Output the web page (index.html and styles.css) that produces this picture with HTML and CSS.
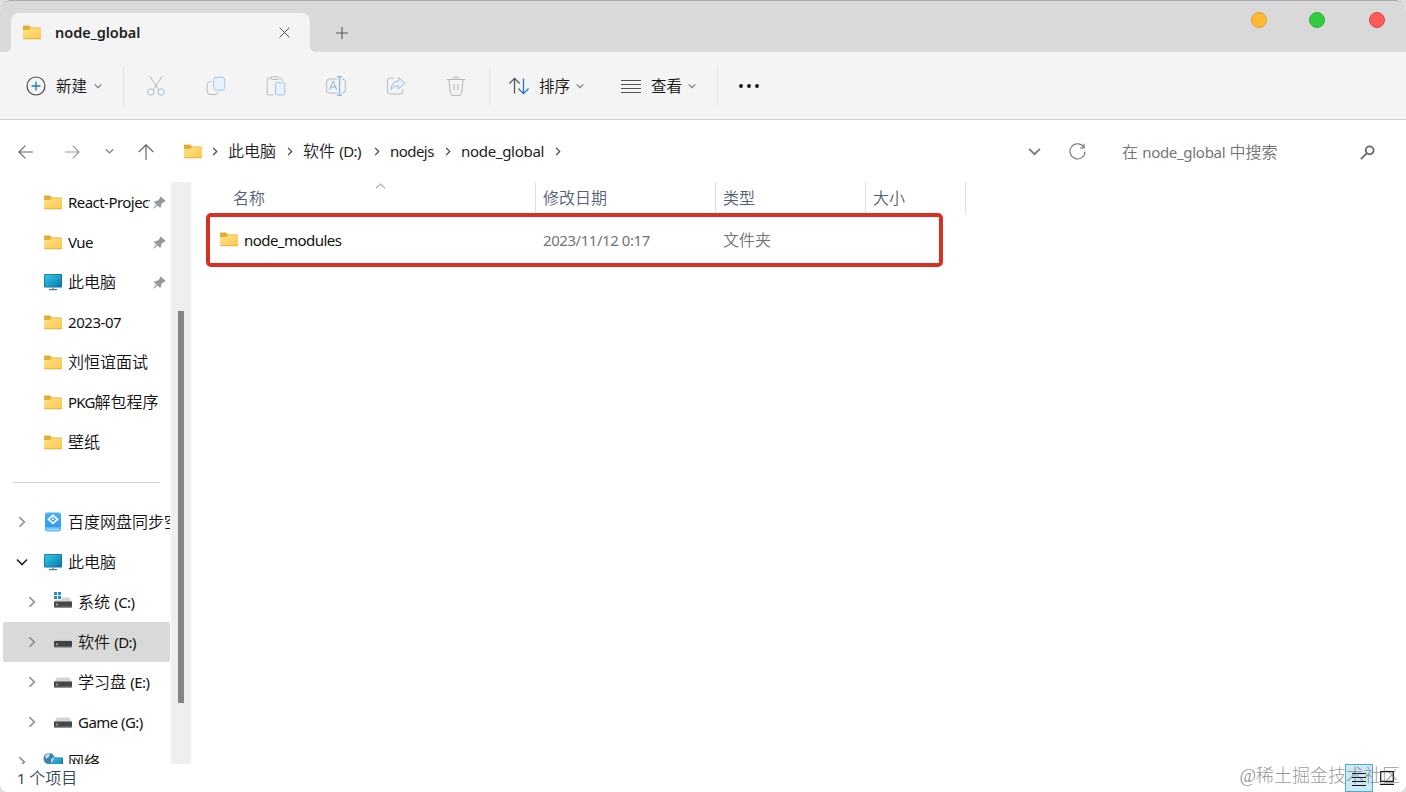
FILE: index.html
```html
<!DOCTYPE html>
<html lang="zh-CN">
<head>
<meta charset="utf-8">
<title>node_global</title>
<link rel="stylesheet" href="styles.css">
</head>
<body>
<svg class="defs" width="0" height="0">
  <defs>
    <linearGradient id="gold" x1="0" y1="0" x2="1" y2="1"><stop offset="0" stop-color="#ffe28c"/><stop offset="1" stop-color="#fbc84b"/></linearGradient>
    <linearGradient id="screen" x1="0" y1="0" x2="1" y2="1"><stop offset="0" stop-color="#32cfe0"/><stop offset="1" stop-color="#0b72b5"/></linearGradient>
    <linearGradient id="sync" x1="0" y1="0" x2="0" y2="1"><stop offset="0" stop-color="#45b2f5"/><stop offset="1" stop-color="#2d94f0"/></linearGradient>
    <symbol id="folder" viewBox="0 0 18 15"><path d="M0 1.2Q0 .5.8.5H6l2 2h9.2q.8 0 .8.8V13H0Z" fill="#e3af32"/><path d="M0 5h5.8L8 3.2h10V13.3q0 .7-.8.7H.8Q0 14 0 13.3Z" fill="url(#gold)"/><path d="M.3 13.8h17.4" stroke="#dba83c" stroke-width=".8"/></symbol>
    <symbol id="pc" viewBox="0 0 18 17"><rect width="18" height="13.6" rx=".8" fill="#14699b"/><rect x=".7" y=".7" width="16.6" height="12.2" fill="url(#screen)"/><path d="M8 13.6h2v2H8z" fill="#8ba0ad"/><path d="M5 15.6h8" stroke="#637783" stroke-width="1.2"/></symbol>
    <symbol id="drive" viewBox="0 0 18 11"><path d="M3 .5h12l3 4.5H0Z" fill="#d3d3d3"/><rect y="4.5" width="18" height="6" rx=".7" fill="#454746"/><path d="M0 9.9h18" stroke="#777" /><rect x="2.2" y="6.7" width="1.5" height="1.5" fill="#a0e5cc"/></symbol>
    <symbol id="drive-flat" viewBox="0 0 18 11"><path d="M2 2.7h14l2 1.8H0Z" fill="#c2c2c2"/><rect y="4" width="18" height="6.3" rx=".7" fill="#414342"/><path d="M0 9.8h18" stroke="#777"/><rect x="2.2" y="6.5" width="1.5" height="1.5" fill="#a0e5cc"/></symbol>
    <symbol id="pin" viewBox="0 0 14 14"><path d="M8.3.5 13.5 5.2 12.3 6.6 11.2 6.4 8.8 9.2 8.6 12 7.4 12.6 4.6 10 1.4 13.4.5 13.5.7 12.5 3.6 9 1.2 6.7 1.8 5.6 4.7 5.2 7.4 2.8 7.2 1.6Z" fill="#949a9f"/></symbol>
    <symbol id="right" viewBox="0 0 8 12"><path d="m1.5 1.2 4.8 4.8-4.8 4.8" fill="none" stroke="currentColor" stroke-width="1.6"/></symbol>
    <symbol id="down" viewBox="0 0 12 8"><path d="m1 1.5 5 5 5-5" fill="none" stroke="currentColor" stroke-width="1.6"/></symbol>
  </defs>
</svg>
<div class="window">
  <header class="titlebar">
    <div class="tab">
      <svg class="folder"><use href="#folder"/></svg>
      <span class="tab-title">node_global</span>
      <svg class="close" viewBox="0 0 12 12"><path d="m.7.7 10.6 10.6M11.3.7.7 11.3"/></svg>
    </div>
    <svg class="add" viewBox="0 0 12 12"><path d="M6 0v12M0 6h12"/></svg>
    <div class="lights"><i class="light amber"></i><i class="light green"></i><i class="light red"></i></div>
  </header>

  <div class="toolbar">
    <div class="tool new">
      <svg class="ic20" viewBox="0 0 20 20"><circle cx="10" cy="10" r="9" stroke="#4c4c4c" stroke-width="1.2"/><path d="M10 5.6v8.8M5.6 10h8.8" stroke="#1d78bb" stroke-width="1.3"/></svg>
      <span>新建</span><svg class="chev"><use href="#down"/></svg>
    </div>
    <i class="sep"></i>
    <div class="actions">
      <svg class="ic20" viewBox="0 0 20 20"><path d="m4 .5 8.7 13.2M16 .5 7.3 13.7" stroke="#b5b8bb"/><circle cx="4.8" cy="16" r="3.2" stroke="#9fc0dc"/><circle cx="15.2" cy="16" r="3.2" stroke="#9fc0dc"/></svg>
      <svg class="ic20" viewBox="0 0 20 20"><path d="M6 5.7H4.3Q1.2 5.7 1.2 8.5v7q0 3 3 3H9q2.4 0 2.7-2.2" stroke="#b5b8bb"/><rect x="7.7" y="1.2" width="11" height="13" rx="2.7" fill="#e7f2fc" stroke="#a5c5df"/></svg>
      <svg class="ic20" viewBox="0 0 20 20"><path d="M7.5 19H3.2Q1.2 19 1.2 17V3.5Q1.2 2 3.2 2H5m9 0h.3Q16.3 2 16.3 4v1" stroke="#b5b8bb"/><rect x="5" y=".8" width="8" height="2.7" rx="1.3" stroke="#b5b8bb"/><rect x="9.5" y="6.7" width="9.3" height="12.3" rx="1.5" fill="#e7f2fc" stroke="#a5c5df"/></svg>
      <svg class="ic20" viewBox="0 0 20 20"><path d="M11 17H3.5Q.6 17 .6 14V6Q.6 3 3.5 3H11m5 0q3.4 0 3.4 3v8q0 3-3.4 3" stroke="#b5b8bb"/><path d="M13.5.7v18.6M11 .7h5M11 19.3h5" stroke="#91b9dd" stroke-width="1.4"/><path d="m3.5 14 3.7-9 3.6 9M4.7 11h4.9" stroke="#8bb8df"/></svg>
      <svg class="ic20" viewBox="0 0 20 20"><path d="M8 2H4.2Q1.3 2 1.3 5v10q0 3 3 3H14q3 0 3-3v-1.5" stroke="#b5b8bb"/><path d="M12.5 1.5 19 7.3l-6.500 5.600V9.700Q8 9.400 4.800 13.700 5.800 5.500 12.500 5Z" fill="#e7f2fc" stroke="#9bbfdd"/></svg>
      <svg class="ic20" viewBox="0 0 20 20"><path d="M1 3.5h18M7.3 3.5Q7.3.8 10 .8t2.7 2.7M3 3.5l1.5 14Q4.7 19.3 6.2 19.3h7.6q1.5 0 1.7-1.8L17 3.5M8.2 8v6.2m3.6-6.2v6.2" stroke="#b2b4b6"/></svg>
    </div>
    <i class="sep"></i>
    <div class="tool sort">
      <svg class="ic20" viewBox="0 0 20 20"><path d="M5.5 17.5V2.5M.4 7.5l5.1-5.1 5.1 5.1" stroke="#555" stroke-width="1.3"/><path d="M14.5 2.5v15M9.4 12.5l5.1 5.1 5.1-5.1" stroke="#2179c4" stroke-width="1.3"/></svg>
      <span>排序</span><svg class="chev"><use href="#down"/></svg>
    </div>
    <div class="tool view">
      <svg class="ic20" viewBox="0 0 20 20"><path d="M0 4.5h20M0 8.5h20M0 12.5h20M0 16.5h20" stroke="#555" stroke-width="1"/></svg>
      <span>查看</span><svg class="chev"><use href="#down"/></svg>
    </div>
    <i class="sep"></i>
    <svg class="dots" viewBox="0 0 20 4"><circle cx="2" cy="2" r="1.9"/><circle cx="10" cy="2" r="1.9"/><circle cx="18" cy="2" r="1.9"/></svg>
  </div>

  <nav class="address">
    <div class="history">
      <svg class="nav-arrow" viewBox="0 0 16 16"><path d="M1 8h14M7.3 1.7 1 8l6.3 6.3"/></svg>
      <svg class="nav-arrow faded" viewBox="0 0 16 16"><path d="M1 8h14M8.7 1.7 15 8l-6.3 6.3"/></svg>
      <svg class="recent"><use href="#down"/></svg>
      <svg class="nav-arrow up" viewBox="0 0 16 16"><path d="M8 16V.9M.7 8 8 .8 15.3 8"/></svg>
    </div>
    <div class="crumbs">
      <svg class="folder"><use href="#folder"/></svg>
      <svg class="crumb-arrow"><use href="#right"/></svg>
      <span class="crumb pc">此电脑</span>
      <svg class="crumb-arrow"><use href="#right"/></svg>
      <span class="crumb disk">软件 <b>(D:)</b></span>
      <svg class="crumb-arrow"><use href="#right"/></svg>
      <span class="crumb js"><b>nodejs</b></span>
      <svg class="crumb-arrow"><use href="#right"/></svg>
      <span class="crumb global"><b>node_global</b></span>
      <svg class="crumb-arrow"><use href="#right"/></svg>
    </div>
    <svg class="history-down"><use href="#down"/></svg>
    <svg class="refresh" viewBox="0 0 18 18"><path d="M15.7 4.5A8 8 0 1 0 17 9M16 .8v4.4h-4.4"/></svg>
    <span class="search">在 <b>node_global</b> 中搜索</span>
    <svg class="magnifier" viewBox="0 0 14 14"><circle cx="9" cy="5" r="3.7"/><path d="M6.2 7.8.8 13.2"/></svg>
  </nav>

  <div class="main">
    <aside class="sidebar">
      <div class="tree">
        <div class="item"><svg class="folder"><use href="#folder"/></svg><span class="short"><b>React-Project</b></span><svg class="pin"><use href="#pin"/></svg></div>
        <div class="item"><svg class="folder"><use href="#folder"/></svg><span class="short"><b>Vue</b></span><svg class="pin"><use href="#pin"/></svg></div>
        <div class="item"><svg class="pc-icon"><use href="#pc"/></svg><span class="short">此电脑</span><svg class="pin"><use href="#pin"/></svg></div>
        <div class="item"><svg class="folder"><use href="#folder"/></svg><span><b class="number">2023-07</b></span></div>
        <div class="item"><svg class="folder"><use href="#folder"/></svg><span>刘恒谊面试</span></div>
        <div class="item"><svg class="folder"><use href="#folder"/></svg><span><b class="caps">PKG</b>解包程序</span></div>
        <div class="item"><svg class="folder"><use href="#folder"/></svg><span>壁纸</span></div>
        <div class="rule"></div>
        <div class="item node"><svg class="arrow"><use href="#right"/></svg><svg class="sync" viewBox="0 0 18 20"><rect x="1" y=".5" width="16" height="18.5" rx="2.5" fill="url(#sync)"/><path d="M1 15h16v2q0 2.5-2.5 2.5h-11Q1 19.5 1 17Z" fill="#62baff"/><path d="M3 17.3h12" stroke="#c5e5ff"/><path d="m9 3.3 4.5 4L9 11.3l-4.5-4Z" fill="none" stroke="#fff" stroke-width="1.7"/><circle cx="9" cy="7.3" r="1" fill="#fff"/></svg><span>百度网盘同步空间</span></div>
        <div class="item node open"><svg class="arrow"><use href="#down"/></svg><svg class="pc-icon"><use href="#pc"/></svg><span>此电脑</span></div>
        <div class="item node child"><svg class="arrow"><use href="#right"/></svg><svg class="system" viewBox="0 0 18 17"><path d="M0 0h3v3H0zM4 0h3v3H4zM0 4h3v3H0zM4 4h3v3H4z" fill="#238fc8"/><path d="M8 5.5h7l3 4.5H0l1.5-2H7Z" fill="#d3d3d3"/><rect y="9.5" width="18" height="6" rx=".7" fill="#454746"/><path d="M0 15h18" stroke="#777"/><rect x="2.2" y="11.7" width="1.5" height="1.5" fill="#a0e5cc"/></svg><span>系统 <b>(C:)</b></span></div>
        <div class="item node child selected"><svg class="arrow"><use href="#right"/></svg><svg class="drive"><use href="#drive-flat"/></svg><span>软件 <b>(D:)</b></span></div>
        <div class="item node child"><svg class="arrow"><use href="#right"/></svg><svg class="drive"><use href="#drive"/></svg><span>学习盘 <b>(E:)</b></span></div>
        <div class="item node child"><svg class="arrow"><use href="#right"/></svg><svg class="drive"><use href="#drive"/></svg><span><b>Game (G:)</b></span></div>
        <div class="item node"><svg class="arrow"><use href="#right"/></svg><svg class="network" viewBox="0 0 20 18"><rect x="5" y="4.5" width="15" height="11" fill="#14699b"/><rect x="5.7" y="5.2" width="13.6" height="9.6" fill="url(#screen)"/><circle cx="6" cy="5.5" r="5.5" fill="#3d7fae"/><path d="M2 3q3-4 5-2L6 4 3 6ZM8 6l3-2q0 4-3 6Z" fill="#b8dceb"/></svg><span>网络</span></div>
      </div>
      <div class="scrollbar"><div class="thumb"></div></div>
    </aside>
    <section class="files">
      <div class="columns">
        <div class="col name">名称<svg class="ascending" viewBox="0 0 12 6"><path d="M1 5.5 6 .8l5 4.7"/></svg></div>
        <div class="col date">修改日期</div><div class="col type">类型</div><div class="col size">大小</div>
      </div>
      <div class="file-row">
        <svg class="folder"><use href="#folder"/></svg>
        <span class="filename"><b>node_modules</b></span><span class="filedate"><b class="number">2023/11/12 0:17</b></span><span class="filetype">文件夹</span>
      </div>
    </section>
  </div>
  <footer class="status">
    <span><b>1</b> 个项目</span>
    <div class="views">
      <i class="details"><svg viewBox="0 0 14 14"><path d="M0 1.5h14M0 5.5h14M0 9.5h14M0 13.5h14"/></svg></i>
      <svg class="thumbs" viewBox="0 0 14 14"><path d="M.7.7h12.6v9.6H.7ZM0 13.3h14"/></svg>
    </div>
    <div class="watermark">@稀土掘金技术社区</div>
  </footer>
</div>
</body>
</html>
```
FILE: styles.css
```css
* { box-sizing: border-box; }
body { margin: 0; background: #dedede; font: 350 16px/24px "Noto Sans", "Noto Sans CJK SC", sans-serif; color: #111; }
svg { display: block; flex: none; fill: none; }
span { white-space: nowrap; }
b { font-weight: 400; font-size: 15px; letter-spacing: -.54px; }
b.number { letter-spacing: -.44px; }
b.caps { letter-spacing: -.8px; }
.defs { position: absolute; }
.window { position: relative; width: 1406px; height: 792px; display: flex; flex-direction: column; overflow: hidden; background: #fff; border-radius: 10px 10px 8px 8px; }
.folder { width: 18px; height: 15px; }

.titlebar { height: 52px; flex: none; display: flex; align-items: flex-start; background: #d9d9d9; border-radius: 10px 10px 0 0; box-shadow: inset 0 2px 0 -1px #aaa; padding: 13px 21px 0 11px; }
.tab { position: relative; width: 299px; height: 39px; display: flex; align-items: center; padding: 0 20px 0 12px; background: #f4f4f4; border-radius: 8px 8px 0 0; }
.tab::before, .tab::after { content: ""; position: absolute; bottom: 0; width: 5px; height: 5px; }
.tab::before { left: -5px; background: radial-gradient(circle at 0 0, transparent 4.5px, #f4f4f4 5px); }
.tab::after { right: -5px; background: radial-gradient(circle at 100% 0, transparent 4.5px, #f4f4f4 5px); }
.tab-title { margin: 0 0 2px 14px; font-size: 14.5px; font-weight: 600; letter-spacing: -.03px; color: #222; }
.close { width: 11px; height: 11px; margin-left: auto; stroke: #444; }
.add { width: 12px; height: 12px; margin: 14px 0 0 26px; stroke: #555; stroke-width: 1.1; }
.lights { display: flex; margin-left: auto; margin-top: -1px; }
.light { width: 16px; height: 16px; border-radius: 50%; }
.amber { background: #ffb932; border: 1px solid #e0a02b; }
.green { margin-left: 42px; background: #33c941; border: 1px solid #2bb237; }
.red { margin-left: 44px; background: #ff5b59; border: 1px solid #d94847; }

.toolbar { height: 68px; flex: none; display: flex; align-items: center; padding: 1px 0 0 26px; background: #f4f4f4; border-bottom: 1px solid #ccc; font-size: 15.5px; }
.tool { display: flex; align-items: center; }
.tool span { margin-left: 10px; width: 32px; }
.new { width: 97px; }
.ic20 { width: 20px; height: 20px; }
.chev { width: 8px; height: 6px; margin-left: 5px; color: #777; }
.new .chev { margin-left: 6px; }
.sep { width: 1px; height: 38px; background: #e1e1e1; }
.actions { display: flex; width: 365px; gap: 40px; padding-left: 22px; }
.sort { width: 112px; margin-left: 19px; }
.view { width: 96px; }
.dots { width: 20px; height: 4px; margin-left: 21px; fill: #111; }

.address { height: 62px; flex: none; display: flex; align-items: center; padding: 0 31px 0 18px; color: #222; }
.history { width: 166px; display: flex; align-items: center; color: #555; }
.nav-arrow { width: 16px; height: 16px; stroke: #666; stroke-width: 1.2; margin-top: 2px; }
.faded { margin-left: 30px; stroke: #999; }
.recent { width: 9px; height: 6px; margin-left: 25px; color: #777; }
.up { margin-left: 24px; width: 16px; }
.crumbs { display: flex; align-items: center; }
.crumb-arrow { width: 6px; height: 9px; color: #444; margin-left: 10px; margin-top: 1px; }
.crumb { margin-left: 10px; }
.crumb.pc { width: 49px; }
.crumb.disk { width: 61px; }
.crumb.js { width: 45px; }
.crumb.global { width: 84px; }
.global b, .search b { letter-spacing: -.3px; }
.history-down { width: 13px; height: 9px; margin-left: auto; color: #777; }
.refresh { width: 17px; height: 17px; margin-left: 28px; stroke: #707070; stroke-width: 1.1; }
.search { width: 238px; margin-left: 36px; margin-top: 2px; color: #747474; }
.magnifier { width: 15px; height: 15px; stroke: #666; stroke-width: 1.7; margin-top: 2px; }

.main { height: 582px; flex: none; display: flex; }
.sidebar { width: 191px; display: flex; gap: 1px; }
.tree { width: 170px; height: 582px; overflow: hidden; }
.item { height: 40px; display: flex; align-items: center; padding-left: 44px; }
.item > span { margin-left: 6px; }
.item .short { width: 82px; overflow: hidden; }
.pin { width: 13px; height: 13px; margin-left: 3px; }
.pc-icon { width: 18px; height: 17px; }
.rule { height: 1px; margin: 20px 10px 19px 13px; background: #d2d2d2; }
.node { padding-left: 18px; }
.arrow { width: 8px; height: 12px; margin-right: 18px; color: #8a8a8a; }
.open .arrow { width: 12px; height: 8px; margin-left: -2px; margin-right: 16px; color: #222; }
.sync { width: 18px; height: 20px; }
.child { padding-left: 28px; }
.drive { width: 18px; height: 11px; }
.system { width: 18px; height: 17px; margin-top: -4px; }
.network { width: 20px; height: 18px; margin-left: -1px; }
.network + span { margin-left: 5px; }
.selected { margin-left: 3px; padding-left: 25px; background: #d9d9d9; border-radius: 2px; }
.scrollbar { width: 20px; background: #efefef; padding: 129px 7px 0; }
.thumb { height: 392px; background: #858585; }

.files { flex: 1; }
.columns { display: flex; height: 32px; color: #526176; }
.col { border-right: 1px solid #dfdfdf; padding: 4px 0 0 7px; height: 32px; }
.col.name { width: 345px; padding-left: 42px; display: flex; }
.col.date { width: 180px; }
.col.type { width: 150px; }
.col.size { width: 100px; }
.ascending { width: 11px; height: 6px; margin-left: 110px; margin-top: -3px; stroke: #777; }
.file-row { width: 737px; height: 54px; margin: -1px 0 0 15px; display: flex; align-items: center; padding-left: 10px; border: 4px solid #d93026; border-radius: 5px; color: #747474; position: relative; background: #fff; }
.file-row .folder { margin-top: -1px; }
.filename { margin-left: 6px; width: 299px; color: #111; }
.filedate { width: 180px; }

.status { height: 28px; flex: none; position: relative; display: flex; align-items: center; padding: 0 12px 0 17px; color: #344759; }
.views { margin-left: auto; display: flex; align-items: center; }
.details { width: 28px; height: 28px; border: 1px solid #4fa8ce; background: #cce8f5; padding: 7px 6px; }
.details svg { width: 14px; height: 14px; stroke: #111; }
.thumbs { width: 14px; height: 14px; margin-left: 7px; stroke: #111; stroke-width: 1.2; }
.watermark { position: absolute; right: 6px; top: -1px; font: 300 18px/26px "Liberation Serif", "Noto Sans CJK SC", serif; color: rgba(90, 90, 90, .65); white-space: nowrap; }
```
